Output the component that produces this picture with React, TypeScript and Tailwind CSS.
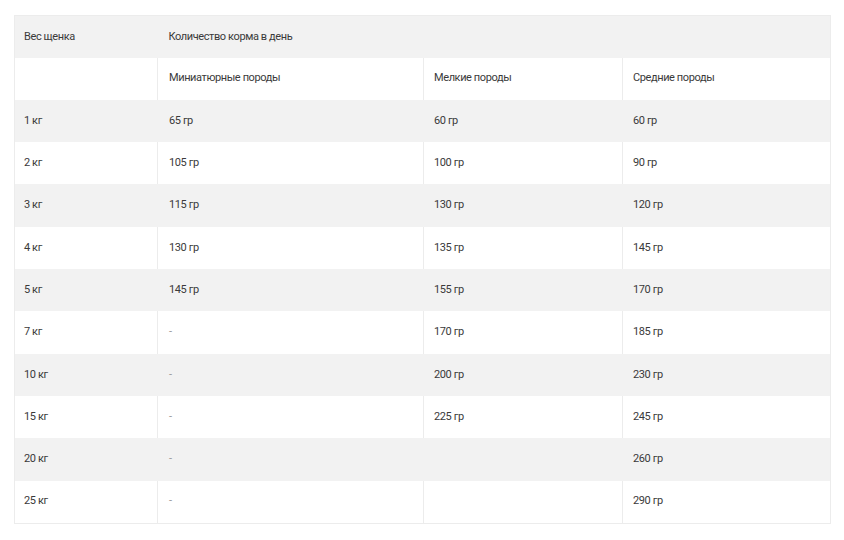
import React from 'react';

const rows: [string, string, string, string][] = [
  ['1 кг', '65 гр', '60 гр', '60 гр'],
  ['2 кг', '105 гр', '100 гр', '90 гр'],
  ['3 кг', '115 гр', '130 гр', '120 гр'],
  ['4 кг', '130 гр', '135 гр', '145 гр'],
  ['5 кг', '145 гр', '155 гр', '170 гр'],
  ['7 кг', '-', '170 гр', '185 гр'],
  ['10 кг', '-', '200 гр', '230 гр'],
  ['15 кг', '-', '225 гр', '245 гр'],
  ['20 кг', '-', '', '260 гр'],
  ['25 кг', '-', '', '290 гр'],
];

const cell = 'h-[42.33px] border-r border-[#ececec] last:border-r-0 align-middle';

const App: React.FC = () => {
  return (
    <div className="w-[844px] h-[540px] bg-white pt-[15px] pl-[14px]" style={{ fontFamily: 'Roboto, sans-serif' }}>
      <table className="w-[817px] table-fixed border-collapse border border-[#ececec] text-[11px] tracking-[-0.4px] text-[#3a3a3a]">
        <colgroup>
          <col className="w-[143px]" />
          <col className="w-[266px]" />
          <col className="w-[199px]" />
          <col />
        </colgroup>
        <tbody>
          {/* Header */}
          <tr className="bg-[#f2f2f2]">
            <td className="h-[42px] pl-[9px] align-middle">Вес щенка</td>
            <td colSpan={3} className="h-[42px] pl-[11px] align-middle">Количество корма в день</td>
          </tr>
          <tr className="bg-white">
            <td className={`${cell} pl-[9px]`}></td>
            <td className={`${cell} pl-[11px]`}>Миниатюрные породы</td>
            <td className={`${cell} pl-[10px]`}>Мелкие породы</td>
            <td className={`${cell} pl-[10px]`}>Средние породы</td>
          </tr>

          {rows.map((r, i) => (
            <tr key={r[0]} className={i % 2 === 0 ? 'bg-[#f2f2f2]' : 'bg-white'}>
              <td className={`${cell} pl-[9px] ${i % 2 === 0 ? 'border-[#f2f2f2]' : ''}`}>{r[0]}</td>
              <td className={`${cell} pl-[11px] ${i % 2 === 0 ? 'border-[#f2f2f2]' : ''} ${r[1] === '-' ? 'text-[#999]' : ''}`}>{r[1]}</td>
              <td className={`${cell} pl-[10px] ${i % 2 === 0 ? 'border-[#f2f2f2]' : ''}`}>{r[2]}</td>
              <td className={`${cell} pl-[10px]`}>{r[3]}</td>
            </tr>
          ))}
        </tbody>
      </table>
    </div>
  );
};

export default App;
